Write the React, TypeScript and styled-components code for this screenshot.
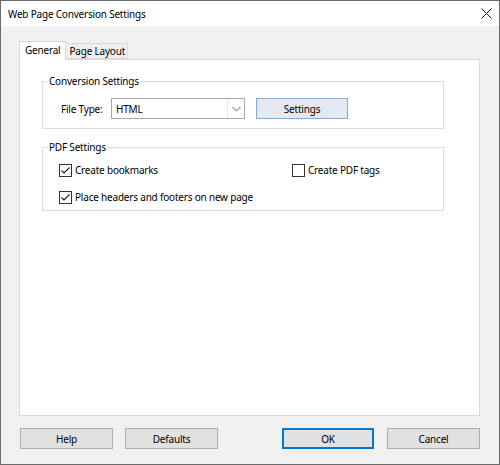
import styled, { createGlobalStyle } from "styled-components";

const GlobalStyle = createGlobalStyle`
  html, body {
    margin: 0;
    padding: 0;
    background: #ffffff;
  }
  body {
    font-family: "Noto Sans", "Open Sans", Arial, sans-serif;
    font-size: 10px;
    letter-spacing: -0.2px;
    color: #000000;
  }
`;

const Window = styled.div`
  width: 500px;
  height: 465px;
  box-sizing: border-box;
  border: 1px solid #6b6b6b;
  background: #f0f0f0;
  display: flex;
  flex-direction: column;
`;

const TitleBar = styled.div`
  height: 25px;
  background: #ffffff;
  display: flex;
  align-items: center;
  justify-content: space-between;
  padding: 0 7px 0 7px;
  flex-shrink: 0;
`;

const Title = styled.span`
  font-size: 10px;
`;

const Body = styled.div`
  flex: 1;
  display: flex;
  flex-direction: column;
  padding: 15px 19px 0 18px;
`;

const TabRow = styled.div`
  display: flex;
  align-items: flex-end;
  height: 18px;
  position: relative;
  z-index: 1;
`;

const Tab = styled.div<{ $active?: boolean }>`
  box-sizing: border-box;
  height: ${(p) => (p.$active ? "19px" : "16px")};
  padding: 0 ${(p) => (p.$active ? "5px" : "2px")} 0 ${(p) => (p.$active ? "5px" : "3px")};
  margin-bottom: ${(p) => (p.$active ? "-1px" : "0")};
  background: ${(p) => (p.$active ? "#ffffff" : "#f0f0f0")};
  border: 1px solid #d9d9d9;
  border-bottom: ${(p) => (p.$active ? "none" : "1px solid #d9d9d9")};
  border-left: ${(p) => (p.$active ? "1px solid #d9d9d9" : "none")};
  line-height: ${(p) => (p.$active ? "16px" : "14px")};
  white-space: nowrap;
`;

const Panel = styled.div`
  box-sizing: border-box;
  width: 461px;
  height: 357px;
  background: #ffffff;
  border: 1px solid #d9d9d9;
  padding: 13px 35px 0 22px;
  display: flex;
  flex-direction: column;
  gap: 10px;
`;

const Group = styled.fieldset`
  margin: 0;
  border: 1px solid #dcdcdc;
  padding: 0 0 0 16px;
  min-width: 0;
`;

const Legend = styled.legend`
  padding: 0 1px;
  margin-left: -11px;
  line-height: 16px;
`;

const ConversionRow = styled.div`
  display: flex;
  align-items: center;
  padding: 9px 0 9px 2px;
`;

const Label = styled.span`
  width: 50px;
  white-space: nowrap;
`;

const Select = styled.div`
  box-sizing: border-box;
  width: 134px;
  height: 21px;
  border: 1px solid #a6a6a6;
  background: #ffffff;
  display: flex;
  align-items: center;
  justify-content: space-between;
  padding-left: 4px;
`;

const Chevron = styled.div`
  width: 16px;
  height: 19px;
  display: flex;
  align-items: center;
  justify-content: center;
  border-left: 1px solid #e8e8e8;
`;

const Button = styled.div<{ $width: number; $tint?: boolean; $focus?: boolean }>`
  box-sizing: border-box;
  width: ${(p) => p.$width}px;
  height: 21px;
  display: flex;
  align-items: center;
  justify-content: center;
  background: ${(p) => (p.$tint ? "#e3e9f0" : "#e1e1e1")};
  border: 1px solid ${(p) => (p.$tint ? "#84acd6" : p.$focus ? "#0078d7" : "#adadad")};
  box-shadow: ${(p) => (p.$focus ? "inset 0 0 0 1px #0078d7" : "none")};
`;

const SettingsButton = styled(Button)`
  margin-left: 11px;
`;

const CheckGrid = styled.div`
  display: grid;
  grid-template-columns: 233px 1fr;
  row-gap: 11px;
  padding: 7px 0 5px 0;
`;

const CheckRow = styled.label<{ $span?: boolean }>`
  display: flex;
  align-items: center;
  height: 16px;
  gap: 3px;
  white-space: nowrap;
  grid-column: ${(p) => (p.$span ? "1 / span 2" : "auto")};
`;

const Footer = styled.div`
  display: flex;
  align-items: center;
  padding-top: 12px;
  padding-left: 1px;
`;

const Spacer = styled.div`
  flex: 1;
`;

const FooterGap = styled.div<{ $w: number }>`
  width: ${(p) => p.$w}px;
`;

function CheckBox({ checked }: { checked: boolean }) {
  return (
    <svg width="13" height="13" viewBox="0 0 13 13">
      <rect x="0.5" y="0.5" width="12" height="12" fill="#ffffff" stroke="#333333" />
      {checked && (
        <path d="M2.5 6.5 L5 9 L10.5 3.5" fill="none" stroke="#222222" strokeWidth="1.2" />
      )}
    </svg>
  );
}

export default function App() {
  return (
    <>
      <GlobalStyle />
      <Window>
        <TitleBar>
          <Title>Web Page Conversion Settings</Title>
          <svg width="11" height="11" viewBox="0 0 11 11">
            <path d="M0.5 0.5 L10.5 10.5 M10.5 0.5 L0.5 10.5" stroke="#111" strokeWidth="1" />
          </svg>
        </TitleBar>
        <Body>
          <TabRow>
            <Tab $active>General</Tab>
            <Tab>Page Layout</Tab>
          </TabRow>
          <Panel>
            <Group>
              <Legend>Conversion Settings</Legend>
              <ConversionRow>
                <Label>File Type:</Label>
                <Select>
                  <span>HTML</span>
                  <Chevron>
                    <svg width="9" height="6" viewBox="0 0 9 6">
                      <path d="M0.5 1 L4.5 5 L8.5 1" fill="none" stroke="#606060" />
                    </svg>
                  </Chevron>
                </Select>
                <SettingsButton $width={92} $tint>
                  Settings
                </SettingsButton>
              </ConversionRow>
            </Group>
            <Group>
              <Legend>PDF Settings</Legend>
              <CheckGrid>
                <CheckRow>
                  <CheckBox checked />
                  Create bookmarks
                </CheckRow>
                <CheckRow>
                  <CheckBox checked={false} />
                  Create PDF tags
                </CheckRow>
                <CheckRow $span>
                  <CheckBox checked />
                  Place headers and footers on new page
                </CheckRow>
              </CheckGrid>
            </Group>
          </Panel>
          <Footer>
            <Button $width={93}>Help</Button>
            <FooterGap $w={12} />
            <Button $width={93}>Defaults</Button>
            <Spacer />
            <Button $width={92} $focus>
              OK
            </Button>
            <FooterGap $w={13} />
            <Button $width={93}>Cancel</Button>
          </Footer>
        </Body>
      </Window>
    </>
  );
}
